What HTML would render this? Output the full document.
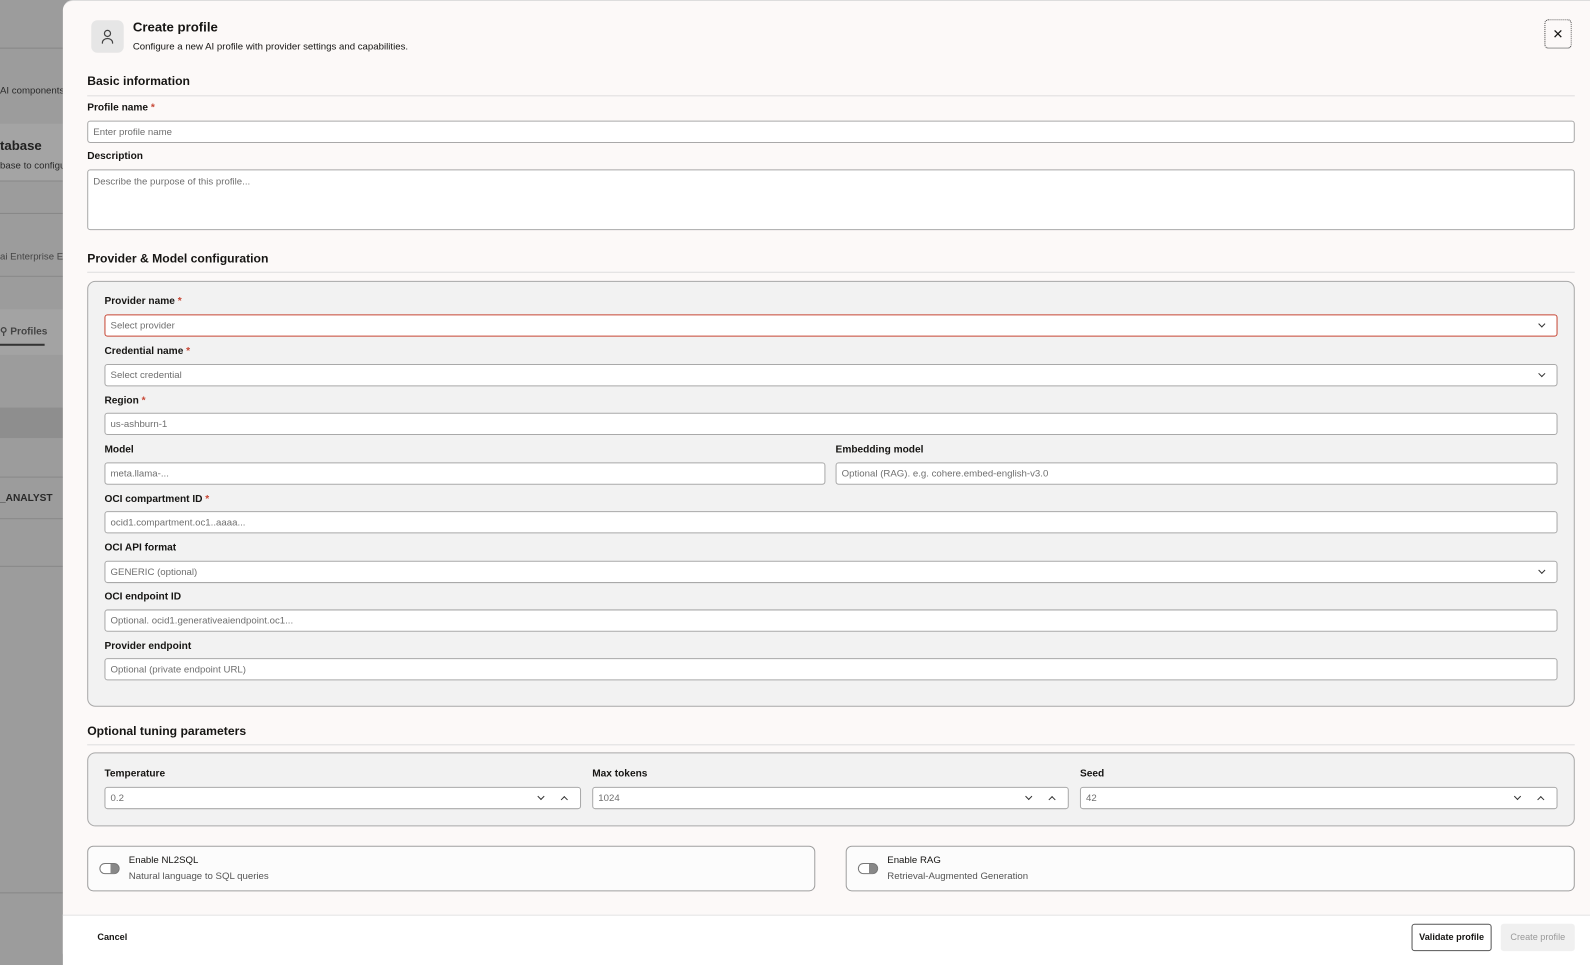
<!DOCTYPE html>
<html><head><meta charset="utf-8"><style>
*{box-sizing:border-box;margin:0;padding:0}
body{width:1590px;height:958px;overflow:hidden;background:#9c9c9c;font-family:"Liberation Sans",Arial,sans-serif;color:#161513}
#w{position:absolute;left:0;top:0;width:1568px;height:945px;transform:scale(1.01403);transform-origin:0 0}
.a{position:absolute}
.bg{color:#2a2a2a;font-size:10px;white-space:nowrap}
.modal{position:absolute;left:62px;top:0;width:1510px;height:950px;background:#fcf9f8;border-radius:10px 0 0 10px;border-top:1px solid #ddd}
.lbl{position:absolute;font-size:10px;font-weight:bold;color:#161513}
.lbl i{color:#c74634;font-style:normal}
.in{position:absolute;height:22px;background:#fff;border:1px solid #a9a9a9;border-radius:3px;font-size:9.5px;color:#6f6f6f;padding:0 5px;line-height:21px}
.h{position:absolute;font-size:12px;font-weight:bold}
.line{position:absolute;height:1px;background:#dedede}
.chev{position:absolute;right:12px;top:6px;width:5px;height:5px;border-right:1.3px solid #333;border-bottom:1.3px solid #333;transform:rotate(45deg)}
.chev.u{transform:rotate(-135deg);top:9px}
.panel{position:absolute;background:#f2f2f2;border:1px solid #a8a8a8;border-radius:8px}
.card{position:absolute;background:#fcfcfc;border:1px solid #a0a0a0;border-radius:6px}
.tog{position:absolute;left:11px;top:16px;width:20px;height:11px;border:1px solid #777;border-radius:6px;background:linear-gradient(90deg,#fff 55%,#888 55%)}
</style></head><body><div id="w">
<div class="a" style="left:0;top:47px;width:62px;height:1px;background:#888"></div>
<div class="a" style="left:0;top:122px;width:62px;height:56px;background:#a4a4a4"></div>
<div class="a bg" style="left:0;top:84px;font-size:9.5px">AI components</div>
<div class="a" style="left:0;top:136px;font-size:13px;font-weight:bold;color:#222">tabase</div>
<div class="a bg" style="left:0;top:158px;font-size:9.5px">base to configu</div>
<div class="a" style="left:0;top:178px;width:62px;height:1px;background:#888"></div>
<div class="a" style="left:0;top:210px;width:62px;height:1px;background:#888"></div>
<div class="a bg" style="left:0;top:248px;font-size:9.5px;color:#444">ai Enterprise Ed</div>
<div class="a" style="left:0;top:272px;width:62px;height:1px;background:#888"></div>
<div class="a" style="left:0;top:305px;width:62px;height:45px;background:#a3a3a3"></div>
<div class="a bg" style="left:0;top:322px;font-weight:bold;color:#444">⚲ Profiles</div>
<div class="a" style="left:0;top:339px;width:44px;height:2px;background:#333"></div>
<div class="a" style="left:0;top:402px;width:62px;height:30px;background:#8e8e8e"></div>
<div class="a" style="left:0;top:470px;width:62px;height:1px;background:#888"></div>
<div class="a bg" style="left:0;top:486px;font-weight:bold">_ANALYST</div>
<div class="a" style="left:0;top:511px;width:62px;height:1px;background:#888"></div>
<div class="a" style="left:0;top:558px;width:62px;height:1px;background:#888"></div>
<div class="a" style="left:0;top:880px;width:62px;height:1px;background:#888"></div>

<div class="modal"></div>
<div class="a" style="left:90px;top:20px;width:32px;height:32px;background:#e6e6e6;border-radius:6px">
<svg width="32" height="32" viewBox="0 0 32 32"><circle cx="16" cy="13" r="3" fill="none" stroke="#444" stroke-width="1.2"/><path d="M11 23v-1a5 4 0 0 1 10 0v1" fill="none" stroke="#444" stroke-width="1.2"/></svg></div>
<div class="a" style="left:131px;top:19px;font-size:13px;font-weight:bold">Create profile</div>
<div class="a" style="left:131px;top:41px;font-size:9.5px">Configure a new AI profile with provider settings and capabilities.</div>
<div class="a" style="left:1523px;top:19px;width:27px;height:29px;border:1px dotted #222;border-bottom:1px solid #888;border-radius:4px;text-align:center;line-height:27px;font-size:13px">✕</div>

<div class="h" style="left:86px;top:73px">Basic information</div>
<div class="line" style="left:86px;top:94px;width:1467px"></div>
<div class="lbl" style="left:86px;top:101px">Profile name <i>*</i></div>
<div class="in" style="left:86px;top:119px;width:1467px">Enter profile name</div>
<div class="lbl" style="left:86px;top:149px">Description</div>
<div class="in" style="left:86px;top:167px;width:1467px;height:60px;line-height:24px">Describe the purpose of this profile...</div>

<div class="h" style="left:86px;top:248px">Provider &amp; Model configuration</div>
<div class="line" style="left:86px;top:268px;width:1467px"></div>
<div class="panel" style="left:86px;top:277px;width:1467px;height:420px"></div>
<div class="lbl" style="left:103px;top:292px">Provider name <i>*</i></div>
<div class="in" style="left:103px;top:310px;width:1433px;border-color:#c74634">Select provider<span class="chev"></span></div>
<div class="lbl" style="left:103px;top:341px">Credential name <i>*</i></div>
<div class="in" style="left:103px;top:359px;width:1433px">Select credential<span class="chev"></span></div>
<div class="lbl" style="left:103px;top:390px">Region <i>*</i></div>
<div class="in" style="left:103px;top:407px;width:1433px">us-ashburn-1</div>
<div class="lbl" style="left:103px;top:438px">Model</div>
<div class="in" style="left:103px;top:456px;width:711px">meta.llama-...</div>
<div class="lbl" style="left:824px;top:438px">Embedding model</div>
<div class="in" style="left:824px;top:456px;width:712px">Optional (RAG). e.g. cohere.embed-english-v3.0</div>
<div class="lbl" style="left:103px;top:487px">OCI compartment ID <i>*</i></div>
<div class="in" style="left:103px;top:504px;width:1433px">ocid1.compartment.oc1..aaaa...</div>
<div class="lbl" style="left:103px;top:535px">OCI API format</div>
<div class="in" style="left:103px;top:553px;width:1433px">GENERIC (optional)<span class="chev"></span></div>
<div class="lbl" style="left:103px;top:583px">OCI endpoint ID</div>
<div class="in" style="left:103px;top:601px;width:1433px">Optional. ocid1.generativeaiendpoint.oc1...</div>
<div class="lbl" style="left:103px;top:632px">Provider endpoint</div>
<div class="in" style="left:103px;top:649px;width:1433px">Optional (private endpoint URL)</div>

<div class="h" style="left:86px;top:714px">Optional tuning parameters</div>
<div class="line" style="left:86px;top:734px;width:1467px"></div>
<div class="panel" style="left:86px;top:742px;width:1467px;height:73px"></div>
<div class="lbl" style="left:103px;top:758px">Temperature</div>
<div class="in" style="left:103px;top:776px;width:470px">0.2<span class="chev" style="right:36px"></span><span class="chev u" style="right:13px"></span></div>
<div class="lbl" style="left:584px;top:758px">Max tokens</div>
<div class="in" style="left:584px;top:776px;width:470px">1024<span class="chev" style="right:36px"></span><span class="chev u" style="right:13px"></span></div>
<div class="lbl" style="left:1065px;top:758px">Seed</div>
<div class="in" style="left:1065px;top:776px;width:471px">42<span class="chev" style="right:36px"></span><span class="chev u" style="right:13px"></span></div>

<div class="card" style="left:86px;top:834px;width:718px;height:45px"><div class="tog"></div>
<div class="a" style="left:40px;top:8px;font-size:9.5px">Enable NL2SQL</div>
<div class="a" style="left:40px;top:24px;font-size:9.5px;color:#555">Natural language to SQL queries</div></div>
<div class="card" style="left:834px;top:834px;width:719px;height:45px"><div class="tog"></div>
<div class="a" style="left:40px;top:8px;font-size:9.5px">Enable RAG</div>
<div class="a" style="left:40px;top:24px;font-size:9.5px;color:#555">Retrieval-Augmented Generation</div></div>

<div class="a" style="left:62px;top:902px;width:1510px;height:50px;background:#fff;border-top:1px solid #e2e2e2"></div>
<div class="a" style="left:96px;top:919px;font-size:9px;font-weight:bold">Cancel</div>
<div class="a" style="left:1392px;top:911px;width:79px;height:27px;border:1px solid #555;border-radius:3px;background:#fff;font-size:9px;font-weight:bold;text-align:center;line-height:25px">Validate profile</div>
<div class="a" style="left:1480px;top:911px;width:73px;height:27px;border-radius:3px;background:#f0f0f0;font-size:9px;color:#999;text-align:center;line-height:27px">Create profile</div>
</div></body></html>
